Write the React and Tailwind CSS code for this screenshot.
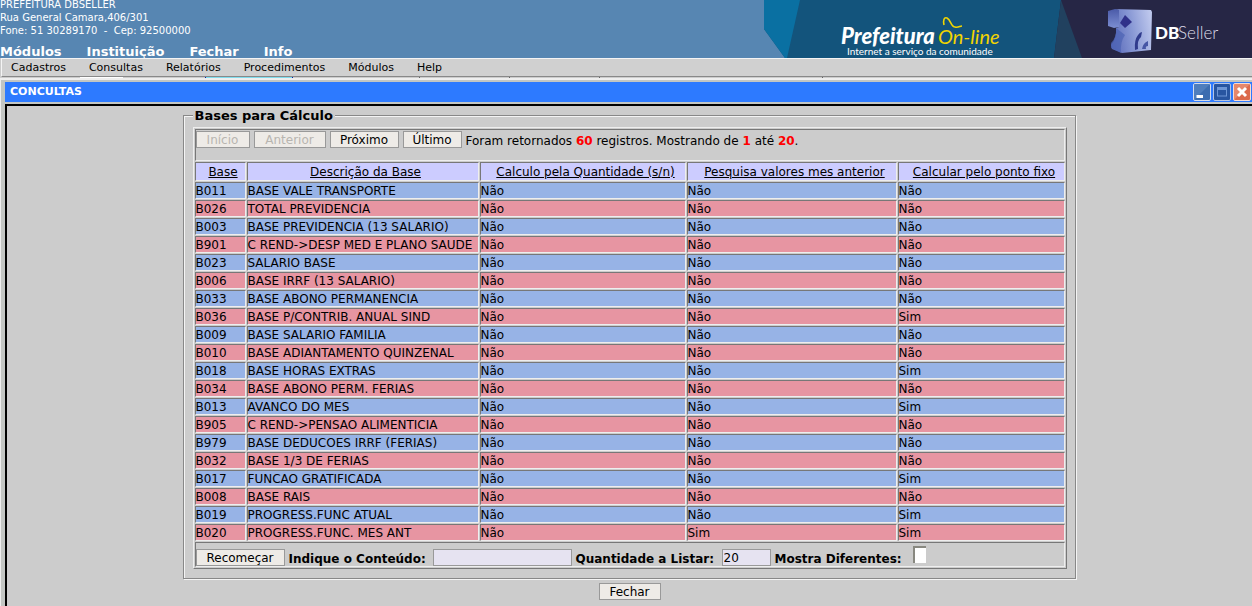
import React from 'react';

const rows = [
  ['B011', 'BASE VALE TRANSPORTE', 'Não', 'Não', 'Não'],
  ['B026', 'TOTAL PREVIDENCIA', 'Não', 'Não', 'Não'],
  ['B003', 'BASE PREVIDENCIA (13 SALARIO)', 'Não', 'Não', 'Não'],
  ['B901', 'C REND->DESP MED E PLANO SAUDE', 'Não', 'Não', 'Não'],
  ['B023', 'SALARIO BASE', 'Não', 'Não', 'Não'],
  ['B006', 'BASE IRRF (13 SALARIO)', 'Não', 'Não', 'Não'],
  ['B033', 'BASE ABONO PERMANENCIA', 'Não', 'Não', 'Não'],
  ['B036', 'BASE P/CONTRIB. ANUAL SIND', 'Não', 'Não', 'Sim'],
  ['B009', 'BASE SALARIO FAMILIA', 'Não', 'Não', 'Não'],
  ['B010', 'BASE ADIANTAMENTO QUINZENAL', 'Não', 'Não', 'Não'],
  ['B018', 'BASE HORAS EXTRAS', 'Não', 'Não', 'Sim'],
  ['B034', 'BASE ABONO PERM. FERIAS', 'Não', 'Não', 'Não'],
  ['B013', 'AVANCO DO MES', 'Não', 'Não', 'Sim'],
  ['B905', 'C REND->PENSAO ALIMENTICIA', 'Não', 'Não', 'Não'],
  ['B979', 'BASE DEDUCOES IRRF (FERIAS)', 'Não', 'Não', 'Não'],
  ['B032', 'BASE 1/3 DE FERIAS', 'Não', 'Não', 'Não'],
  ['B017', 'FUNCAO GRATIFICADA', 'Não', 'Não', 'Sim'],
  ['B008', 'BASE RAIS', 'Não', 'Não', 'Não'],
  ['B019', 'PROGRESS.FUNC ATUAL', 'Não', 'Não', 'Sim'],
  ['B020', 'PROGRESS.FUNC. MES ANT', 'Não', 'Sim', 'Sim'],
];

const headings = [
  'Base',
  'Descrição da Base',
  'Calculo pela Quantidade (s/n)',
  'Pesquisa valores mes anterior',
  'Calcular pelo ponto fixo',
];

const cellBorder =
  'border border-t-[#777777] border-l-[#777777] border-r-[#eeeeee] border-b-[#eeeeee]';
const buttonStyle =
  'h-[17px] border border-[#999999] bg-[#eeebe7] pt-px text-center text-[12px] leading-[14px] whitespace-nowrap disabled:text-[#b8b5b0]';
const fieldStyle = 'h-[17px] border border-[#999999] bg-[#e6e3f1] px-px pt-px text-[12px] leading-[14px]';

function Banner() {
  return (
    <svg viewBox="0 0 488 58" className="h-[58px] w-[488px] shrink-0" role="img" aria-label="Prefeitura On-line, DBSeller">
      <defs>
        <linearGradient id="cube" x1="0" y1="0.6" x2="1" y2="0.4">
          <stop offset="0" stopColor="#5b6bba" />
          <stop offset="0.5" stopColor="#8797d4" />
          <stop offset="1" stopColor="#bcc6ec" />
        </linearGradient>
        <linearGradient id="cubeSide" x1="0" y1="0" x2="0" y2="1">
          <stop offset="0" stopColor="#4a5aa8" />
          <stop offset="1" stopColor="#7c8ed2" />
        </linearGradient>
      </defs>
      <path d="M0 0H488V58H21L0 29Z" fill="#13547c" />
      <path d="M0 0H36L23 58H21L0 29Z" fill="#0a70a2" />
      <path d="M297 0H488V58H290Z" fill="#262645" />
      <path d="M297 0L318 58H290Z" fill="#21415f" />
      <text x="77" y="44" fill="#ffffff" className="font-[Lato,sans-serif] text-[22px] font-black italic">Prefeitura</text>
      <text x="174" y="44" fill="#f3d500" className="font-[Lato,sans-serif] text-[20px] italic">On-line</text>
      <path d="M180 25C179 20 180 17 183 18C187 20 187 27 191 27C194 28 196 26 198 26" fill="none" stroke="#f3d500" strokeWidth="1.6" />
      <text x="83" y="55" fill="#ffffff" className="font-[Lato,sans-serif] text-[10px]">Internet a serviço da comunidade</text>
      <path d="M344 11L351 9L355 10V27L350 28L344 26Z" fill="url(#cubeSide)" />
      <path d="M351 9L387 10L388 12L387 50L358 53L348 49L347 45Q353 38 352 28L355 27V10Z" fill="url(#cube)" />
      <path d="M352 28Q353 37 347 43V48L357 53Q356 42 361 35Z" fill="#4c62b4" opacity="0.7" />
      <path d="M361 15L368 22L361 28L356 23Z" fill="#30318a" />
      <path d="M371 50Q370 40 374 35Q376 32 378 32L377 37Q373 40 374 49Z" fill="#303b8c" />
      <path d="M378 49Q379 43 384 41V46Q381 46 382 49Z" fill="#4656a5" />
      <text x="391" y="39" fill="#ffffff" className="font-[Lato,sans-serif] text-[17px] font-black">DB</text>
      <text x="414" y="39" fill="#dcdce8" className="font-[Lato,sans-serif] text-[17px] font-light">Seller</text>
    </svg>
  );
}

function WindowControls() {
  return (
    <div className="flex gap-[2px]">
      <button aria-label="Minimizar">
        <svg viewBox="0 0 18 18" className="size-[18px]">
          <rect x="0.5" y="0.5" width="17" height="17" rx="1.5" fill="#3c6db0" stroke="#d4dcec" />
          <path d="M1 17V1H17Z" fill="#5b8ac6" opacity="0.6" />
          <rect x="3.5" y="12" width="6.5" height="3" fill="#ffffff" />
        </svg>
      </button>
      <button aria-label="Maximizar">
        <svg viewBox="0 0 18 18" className="size-[18px]">
          <rect x="0.5" y="0.5" width="17" height="17" rx="1.5" fill="#2855a0" stroke="#b4c4e4" />
          <rect x="4.5" y="5" width="9" height="8" fill="none" stroke="#6d96d6" />
          <rect x="4" y="4" width="10" height="3" fill="#6d96d6" />
        </svg>
      </button>
      <button aria-label="Fechar janela">
        <svg viewBox="0 0 18 18" className="size-[18px]">
          <rect x="0.5" y="0.5" width="17" height="17" rx="1.5" fill="#dc6a4c" stroke="#f6dcd4" />
          <path d="M1 17V1H17Z" fill="#eb9c84" opacity="0.6" />
          <path d="M5 5L13 13M13 5L5 13" stroke="#ffffff" strokeWidth="3" />
        </svg>
      </button>
    </div>
  );
}

export default function App() {
  return (
    <div className="flex min-h-screen flex-col overflow-hidden bg-[#cccccc] font-['DejaVu_Sans',sans-serif] text-[12px] text-black">
      <header className="flex h-[58px] justify-between overflow-hidden bg-[#5786b2] text-white">
        <div className="-mt-[2px] whitespace-nowrap">
          <div className="text-[10px] leading-[13px]">
            <p>PREFEITURA DBSELLER</p>
            <p>Rua General Camara,406/301</p>
            <p className="whitespace-pre">Fone: 51 30289170  -  Cep: 92500000</p>
          </div>
          <nav className="mt-2 flex gap-[25px] text-[13px] leading-[14px] font-bold">
            <a href="#modulos">Módulos</a>
            <a href="#instituicao">Instituição</a>
            <a href="#fechar">Fechar</a>
            <a href="#info">Info</a>
          </nav>
        </div>
        <Banner />
      </header>

      <nav className="ml-px flex h-[19px] gap-[23px] border-t border-b border-l border-t-[#f4f4f4] border-b-[#888888] border-l-[#f4f4f4] bg-[#d0d0d0] pl-[9px] text-[11px] leading-[17px]">
        <a href="#cadastros">Cadastros</a>
        <a href="#consultas">Consultas</a>
        <a href="#relatorios">Relatórios</a>
        <a href="#procedimentos">Procedimentos</a>
        <a href="#menu-modulos">Módulos</a>
        <a href="#help">Help</a>
      </nav>

      {/* Sliver of the desktop that shows between the menu and the window */}
      <svg className="h-px w-full shrink-0" aria-hidden="true">
        <rect x="80" width="43" height="1" fill="#ffffff" />
        <rect x="205" width="88" height="1" fill="#1020a0" />
        <rect x="206" width="86" height="1" fill="#80dcec" />
        <rect x="419" width="1" height="1" fill="#666666" />
        <rect x="509" width="1" height="1" fill="#666666" />
        <rect x="599" width="1" height="1" fill="#666666" />
        <rect x="822" width="1" height="1" fill="#666666" />
      </svg>

      <main className="flex grow flex-col border-t-2 border-l border-[#eeeeee] bg-[#c3c6c3] pt-[2px] pl-[4px]">
        <div className="flex h-5 items-center justify-between bg-[#2d7aff] pr-px pl-[5px] text-[11px] font-bold text-white">
          <h1 className="pt-px">CONCULTAS</h1>
          <WindowControls />
        </div>
        <div className="mt-[2px] flex grow flex-col items-center border-t-2 border-l-2 border-black bg-[#cccccc]">
          <form className="flex flex-col items-center" onSubmit={(e) => e.preventDefault()}>
            <fieldset className="mt-[2px] mr-px border border-[#888888] pr-2 pb-[9px] pl-[9px] shadow-[inset_1px_1px_0_#f4f4f4,1px_1px_0_#f4f4f4]">
              <legend className="bg-[#cccccc] px-[2px] pt-px text-[13px] leading-[13px] font-bold">Bases para Cálculo</legend>
              <table className="mt-[5px] table-fixed border-separate border-spacing-px border border-t-[#eeeeee] border-r-[#777777] border-b-[#777777] border-l-[#eeeeee]">
                <colgroup>
                  <col className="w-[51px]" />
                  <col className="w-[232px]" />
                  <col className="w-[206px]" />
                  <col className="w-[210px]" />
                  <col className="w-[167px]" />
                </colgroup>
                <thead>
                  <tr>
                    <td colSpan={5} className={`h-8 p-0 align-top ${cellBorder}`}>
                      <div className="flex items-start gap-1 pt-px whitespace-nowrap">
                        <button className={`w-[54px] ${buttonStyle}`} disabled>Início</button>
                        <button className={`w-[72px] ${buttonStyle}`} disabled>Anterior</button>
                        <button className={`w-[69px] ${buttonStyle}`}>Próximo</button>
                        <button className={`w-[59px] ${buttonStyle}`}>Último</button>
                        <p className="pt-[2px] leading-[16px]">
                          Foram retornados <b className="text-[#ff0000]">60</b> registros. Mostrando de{' '}
                          <b className="text-[#ff0000]">1</b> até <b className="text-[#ff0000]">20</b>.
                        </p>
                      </div>
                    </td>
                  </tr>
                  <tr>
                    {headings.map((heading) => (
                      <th key={heading} className={`h-[19px] bg-[#ccccff] p-0 pt-[2px] pl-[6px] text-center leading-[15px] font-normal whitespace-nowrap ${cellBorder}`}>
                        <a href="#ordenar" className="underline">{heading}</a>
                      </th>
                    ))}
                  </tr>
                </thead>
                <tbody>
                  {rows.map((row) => (
                    <tr key={row[0]} className="odd:bg-[#97b3e6] even:bg-[#e795a2]">
                      {row.map((value, i) => (
                        <td key={i} className={`h-[17px] p-0 pt-px leading-[14px] whitespace-nowrap ${cellBorder}`}>
                          {value}
                        </td>
                      ))}
                    </tr>
                  ))}
                </tbody>
                <tfoot>
                  <tr>
                    <td colSpan={5} className={`h-[25px] p-0 align-bottom ${cellBorder}`}>
                      <div className="flex items-end gap-1 text-[12px] leading-[14px] whitespace-nowrap">
                        <button className={`w-[89px] ${buttonStyle}`}>Recomeçar</button>
                        <div className="flex items-end">
                          <label htmlFor="conteudo" className="w-[144px] font-bold">Indique o Conteúdo:</label>
                          <input id="conteudo" type="text" className={`w-[139px] ${fieldStyle}`} />
                        </div>
                        <div className="flex items-end">
                          <label htmlFor="quantidade" className="w-[146px] font-bold">Quantidade a Listar:</label>
                          <input id="quantidade" type="text" defaultValue="20" className={`w-[49px] ${fieldStyle}`} />
                        </div>
                        <label htmlFor="diferentes" className="w-[134px] font-bold">Mostra Diferentes:</label>
                        <input
                          id="diferentes"
                          type="checkbox"
                          className="mb-[3px] h-[17px] w-[13px] appearance-none border-t-2 border-l-2 border-[#888880] bg-white"
                        />
                      </div>
                    </td>
                  </tr>
                </tfoot>
              </table>
            </fieldset>
            <button className={`mt-1 w-[62px] ${buttonStyle}`}>Fechar</button>
          </form>
        </div>
      </main>
    </div>
  );
}
